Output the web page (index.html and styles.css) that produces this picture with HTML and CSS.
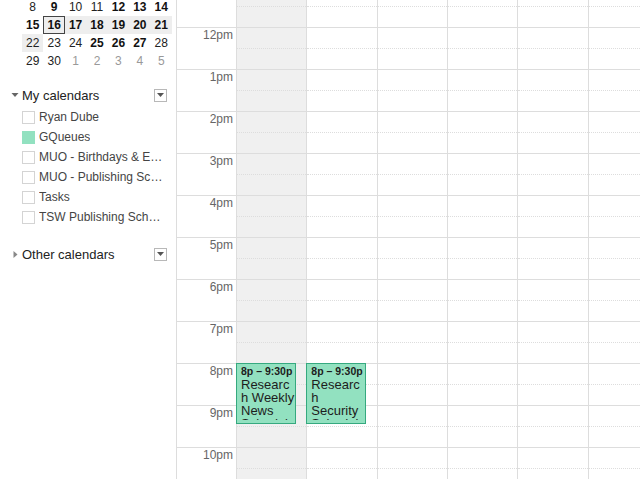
FILE: index.html
```html
<!DOCTYPE html>
<html lang="en">
<head>
    <meta charset="UTF-8">
    <meta name="viewport" content="width=device-width, initial-scale=1.0">
    <title>Calendar - Week</title>
    <link rel="stylesheet" href="styles.css">
</head>
<body>
    <div class="sidebar">
        <table class="minical">
            <tr>
                <td>8</td><td class="busy">9</td><td>10</td><td>11</td><td class="busy">12</td><td class="busy">13</td><td class="busy">14</td>
            </tr>
            <tr>
                <td class="busy">15</td><td class="busy sel today">16</td><td class="busy sel">17</td><td class="busy sel">18</td><td class="busy sel">19</td><td class="busy sel">20</td><td class="busy sel">21</td>
            </tr>
            <tr>
                <td class="sel">22</td><td>23</td><td>24</td><td class="busy">25</td><td class="busy">26</td><td class="busy">27</td><td>28</td>
            </tr>
            <tr>
                <td>29</td><td>30</td><td class="other">1</td><td class="other">2</td><td class="other">3</td><td class="other">4</td><td class="other">5</td>
            </tr>
        </table>

        <div class="section">
            <div class="section-head">
                <svg class="arrow" width="7" height="4" viewBox="0 0 7 4"><polygon points="0,0 7,0 3.5,4" fill="#666"/></svg>
                <span class="section-title">My calendars</span>
                <span class="menu-btn"><svg width="7" height="4" viewBox="0 0 7 4"><polygon points="0,0 7,0 3.5,4" fill="#555"/></svg></span>
            </div>
            <ul class="cal-list">
                <li><span class="check"></span><span class="cal-name">Ryan Dube</span></li>
                <li><span class="check on"></span><span class="cal-name">GQueues</span></li>
                <li><span class="check"></span><span class="cal-name">MUO - Birthdays &amp; Events</span></li>
                <li><span class="check"></span><span class="cal-name">MUO - Publishing Schedule</span></li>
                <li><span class="check"></span><span class="cal-name">Tasks</span></li>
                <li><span class="check"></span><span class="cal-name">TSW Publishing Schedule</span></li>
            </ul>
        </div>

        <div class="section other-section">
            <div class="section-head">
                <svg class="arrow" width="7" height="7" viewBox="0 0 7 7"><polygon points="2,0 6,3.5 2,7" fill="#888"/></svg>
                <span class="section-title">Other calendars</span>
                <span class="menu-btn"><svg width="7" height="4" viewBox="0 0 7 4"><polygon points="0,0 7,0 3.5,4" fill="#555"/></svg></span>
            </div>
        </div>
    </div>

    <div class="main">
        <div class="grid">
            <div class="times">
                <div class="time-slot">11am</div>
                <div class="time-slot">12pm</div>
                <div class="time-slot">1pm</div>
                <div class="time-slot">2pm</div>
                <div class="time-slot">3pm</div>
                <div class="time-slot">4pm</div>
                <div class="time-slot">5pm</div>
                <div class="time-slot">6pm</div>
                <div class="time-slot">7pm</div>
                <div class="time-slot">8pm</div>
                <div class="time-slot">9pm</div>
                <div class="time-slot">10pm</div>
                <div class="time-slot">11pm</div>
            </div>
            <div class="day today-col">
                <div class="event">
                    <div class="event-time">8p – 9:30p</div>
                    <div class="event-title">Research Weekly News Schedule</div>
                </div>
            </div>
            <div class="day">
                <div class="event">
                    <div class="event-time">8p – 9:30p</div>
                    <div class="event-title">Research Security Schedule</div>
                </div>
            </div>
            <div class="day"></div>
            <div class="day"></div>
            <div class="day"></div>
            <div class="day"></div>
            <div class="day"></div>
        </div>
    </div>

    <script>
        // fill each day column with hour slots (11am - 11pm)
        document.querySelectorAll('.day').forEach(day => {
            for (let i = 0; i < 13; i++) {
                const slot = document.createElement('div');
                slot.className = 'hour';
                slot.innerHTML = '<div class="half"></div><div class="half second"></div>';
                day.insertBefore(slot, day.firstChild);
            }
        });
    </script>
</body>
</html>
```

FILE: styles.css
```css
body {
    margin: 0;
    font-family: 'Liberation Sans', Arial, sans-serif;
    display: flex;
    height: 100vh;
    overflow: hidden;
    background: white;
    color: #222;
}

.sidebar {
    width: 176px;
    flex-shrink: 0;
}

.minical {
    margin: -2px 0 0 22px;
    width: 150px;
    border-collapse: collapse;
    table-layout: fixed;
}

.minical td {
    height: 18px;
    padding: 0;
    text-align: center;
    font-size: 12px;
    color: #222;
}

.minical td.busy {
    font-weight: bold;
    color: #111;
}

.minical td.sel {
    background: #eeeeee;
}

.minical td.today {
    box-shadow: inset 0 0 0 1px #444;
}

.minical td.other {
    color: #999;
}

.section {
    margin-top: 15px;
}

.other-section {
    margin-top: 17px;
}

.section-head {
    display: flex;
    align-items: center;
    height: 20px;
    padding-left: 8px;
    padding-right: 9px;
}

.arrow {
    width: 14px;
    flex-shrink: 0;
}

.section-title {
    font-size: 13px;
    color: #222;
}

.menu-btn {
    margin-left: auto;
    width: 13px;
    height: 13px;
    box-sizing: border-box;
    border: 1px solid #b8b8b8;
    background: white;
    display: flex;
    align-items: center;
    justify-content: center;
}

.cal-list {
    list-style: none;
    margin: 2px 0 0;
    padding: 0;
}

.cal-list li {
    display: flex;
    align-items: center;
    height: 20px;
    padding-left: 22px;
}

.check {
    width: 13px;
    height: 13px;
    box-sizing: border-box;
    border: 1px solid #d4d4d4;
    margin-right: 4px;
    flex-shrink: 0;
}

.check.on {
    background: #92e1c0;
    border-color: #92e1c0;
}

.cal-name {
    font-size: 12px;
    color: #444;
    max-width: 127px;
    white-space: nowrap;
    overflow: hidden;
    text-overflow: ellipsis;
}

.main {
    flex: 1;
    overflow: hidden;
    border-left: 1px solid #dddddd;
}

.grid {
    display: flex;
    margin-top: -15px;
}

.times {
    width: 59px;
    flex-shrink: 0;
}

.time-slot {
    height: 42px;
    box-sizing: border-box;
    border-top: 1px solid #dddddd;
    text-align: right;
    padding-right: 3px;
    font-size: 12px;
    line-height: 14px;
    color: #666;
}

.day {
    width: 70.33px;
    flex-shrink: 0;
    box-sizing: border-box;
    border-left: 1px solid #dddddd;
    position: relative;
}

.today-col {
    background: #f0f0f0;
}

.hour {
    border-top: 1px solid #dddddd;
}

.half {
    height: 20px;
}

.half.second {
    border-top: 1px dotted #dddddd;
}

.event {
    position: absolute;
    top: 378px;
    left: -1px;
    width: 60px;
    height: 61px;
    box-sizing: border-box;
    border: 1px solid #35a97f;
    background: #92e1c0;
    padding: 0 0 0 4px;
    overflow: hidden;
    color: #1d1d1d;
}

.event-time {
    font-size: 10.5px;
    font-weight: bold;
    line-height: 14px;
    white-space: nowrap;
}

.event-title {
    font-size: 13px;
    line-height: 13px;
    max-height: 42px;
    overflow: hidden;
    overflow-wrap: break-word;
    word-break: break-word;
}
```
